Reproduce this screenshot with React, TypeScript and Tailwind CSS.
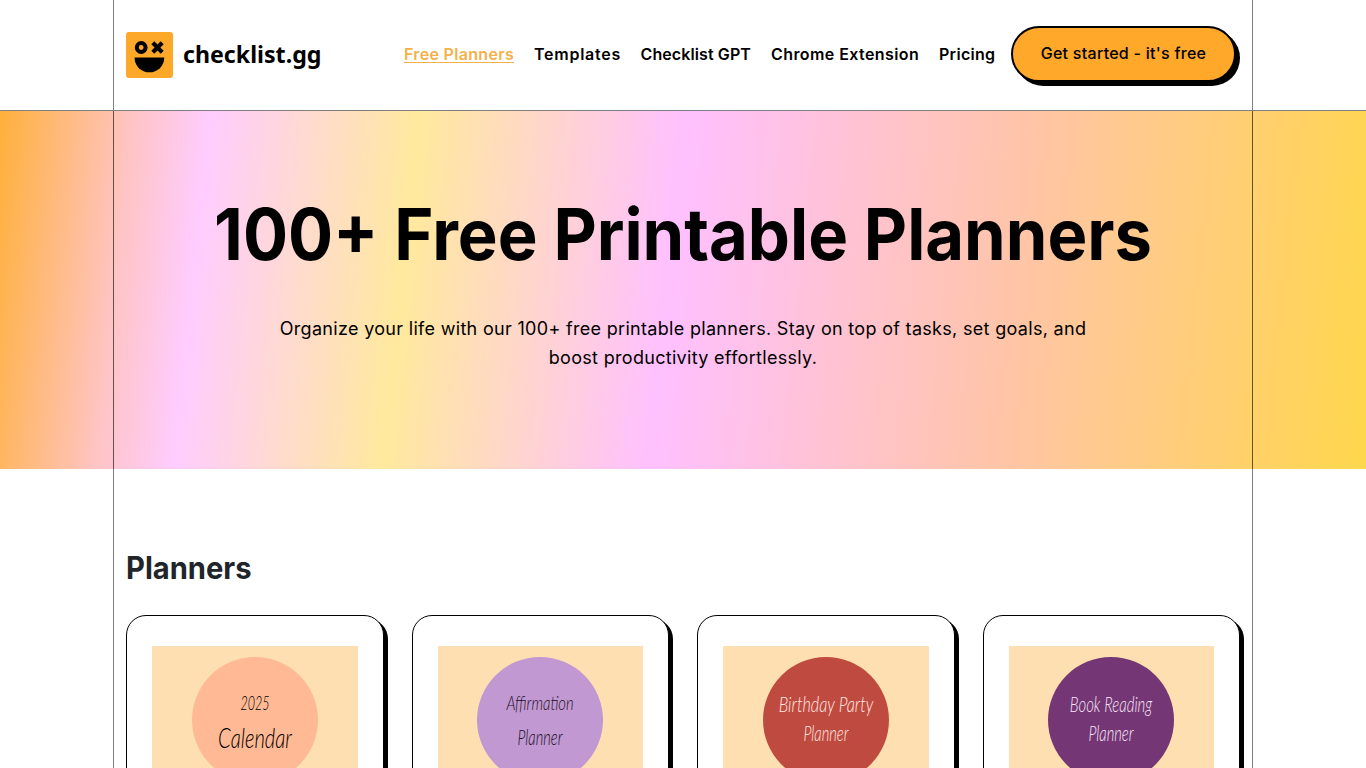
type NavLink = { label: string; className: string };

type Planner = {
  id: string;
  circle: string;
  lines: { text: string; className: string }[];
};

const navLinks: NavLink[] = [
  { label: "Free Planners", className: "w-[110px] tracking-[.32px] text-[#f5b04a] underline underline-offset-2" },
  { label: "Templates", className: "w-[86.5px] tracking-[.75px]" },
  { label: "Checklist GPT", className: "w-[110.5px] tracking-[.1px]" },
  { label: "Chrome Extension", className: "w-[148px] tracking-[.42px]" },
  { label: "Pricing", className: "w-14 tracking-[.3px]" },
];

const planners: Planner[] = [
  {
    id: "calendar",
    circle: "bg-[#ffb994] text-black",
    lines: [
      { text: "2025", className: "top-[34px] text-[19px] scale-x-[.66]" },
      { text: "Calendar", className: "top-[68px] text-[28px] scale-x-[.72]" },
    ],
  },
  {
    id: "affirmation",
    circle: "bg-[#c198d2] text-[#1c0f24]",
    lines: [
      { text: "Affirmation", className: "top-[33px] text-[20px] scale-x-[.74]" },
      { text: "Planner", className: "top-[68px] text-[21px] scale-x-[.7]" },
    ],
  },
  {
    id: "birthday",
    circle: "bg-[#bf4b40] text-[#ffe9e0]",
    lines: [
      { text: "Birthday Party", className: "top-[35px] text-[22px] scale-x-[.74]" },
      { text: "Planner", className: "top-[64px] text-[21px] scale-x-[.7]" },
    ],
  },
  {
    id: "reading",
    circle: "bg-[#743674] text-[#f8e6fa]",
    lines: [
      { text: "Book Reading", className: "top-[35px] text-[22px] scale-x-[.68]" },
      { text: "Planner", className: "top-[64px] text-[21px] scale-x-[.7]" },
    ],
  },
];

function Logo() {
  return (
    <a href="#" className="flex items-center">
      <svg width="47" height="46" viewBox="0 0 47 46">
        <rect width="47" height="46" rx="3" fill="#fea829" />
        <circle cx="15.2" cy="15.5" r="4.4" fill="none" stroke="#000" strokeWidth="4" />
        <path d="M26.8 10.8l9.4 9.4M36.2 10.8l-9.4 9.4" stroke="#000" strokeWidth="4.2" />
        <path d="M8.6 25.5h29.6v.6a14.8 14.2 0 0 1-29.6 0z" fill="#000" />
      </svg>
      <span className="ml-2.5 origin-left scale-x-[.965] pb-[3px] whitespace-nowrap font-['Noto_Sans',sans-serif] text-2xl font-bold leading-8">
        checklist.gg
      </span>
    </a>
  );
}

function Header() {
  return (
    <header className="border-b border-black/50">
      <div className="mx-auto flex h-[110px] w-[1140px] items-center border-x border-black/50 px-3">
        <Logo />
        <nav className="ml-auto flex gap-5 pb-0.5 text-base font-semibold">
          {navLinks.map((l) => (
            <a key={l.label} href="#" className={["whitespace-nowrap", l.className].join(" ")}>
              {l.label}
            </a>
          ))}
        </nav>
        <button className="mr-1 mb-0.5 ml-4 h-14 w-[225px] rounded-full border-2 border-black bg-[#ffa829] pb-0.5 text-base font-medium tracking-[.27px] whitespace-nowrap shadow-[4px_4px_0_#000]">
          Get started - it's free
        </button>
      </div>
    </header>
  );
}

function Hero() {
  return (
    <section className="bg-[linear-gradient(96deg,#ffb03a_0%,#ffc4c4_9.5%,#ffccff_15%,#ffe99d_30%,#ffc0ff_49%,#ffc5a6_74%,#ffd74c_100%)]">
      <div className="mx-auto h-[358px] w-[1140px] border-x border-black/60 pt-[78px] text-center">
        <h1 className="scale-x-[.942] text-[71px] leading-[90px] font-bold whitespace-nowrap">
          100+ Free Printable Planners
        </h1>
        <p className="mt-[35px] text-lg leading-[29px] tracking-[.31px]">
          Organize your life with our 100+ free printable planners. Stay on top of tasks, set goals, and
          <br />
          boost productivity effortlessly.
        </p>
      </div>
    </section>
  );
}

function PlannerCard({ planner }: { planner: Planner }) {
  return (
    <a href="#" className="block h-[420px] rounded-[20px] border border-black bg-white px-[25px] pt-[30px] shadow-[4px_4px_0_#000]">
      <div className="flex h-[266px] justify-center bg-[#fedfb1] pt-[11px]">
        <div className={["relative size-[126px] rounded-full", planner.circle].join(" ")}>
          {planner.lines.map((line) => (
            <span
              key={line.text}
              className={[
                "absolute -inset-x-6 text-center font-['Lato',cursive] leading-6 font-light italic whitespace-nowrap",
                line.className,
              ].join(" ")}
            >
              {line.text}
            </span>
          ))}
        </div>
      </div>
    </a>
  );
}

export default function App() {
  return (
    <div className="h-screen overflow-hidden bg-white font-['Inter',sans-serif] text-black">
      <Header />
      <Hero />
      <main className="mx-auto w-[1140px] border-x border-black/50 px-3 pt-[80px]">
        <h2 className="origin-left scale-x-[.94] text-[31px] leading-[38px] font-bold text-[#212529]">Planners</h2>
        <div className="mt-7 grid grid-cols-4 gap-7">
          {planners.map((p) => (
            <PlannerCard key={p.id} planner={p} />
          ))}
        </div>
      </main>
    </div>
  );
}
